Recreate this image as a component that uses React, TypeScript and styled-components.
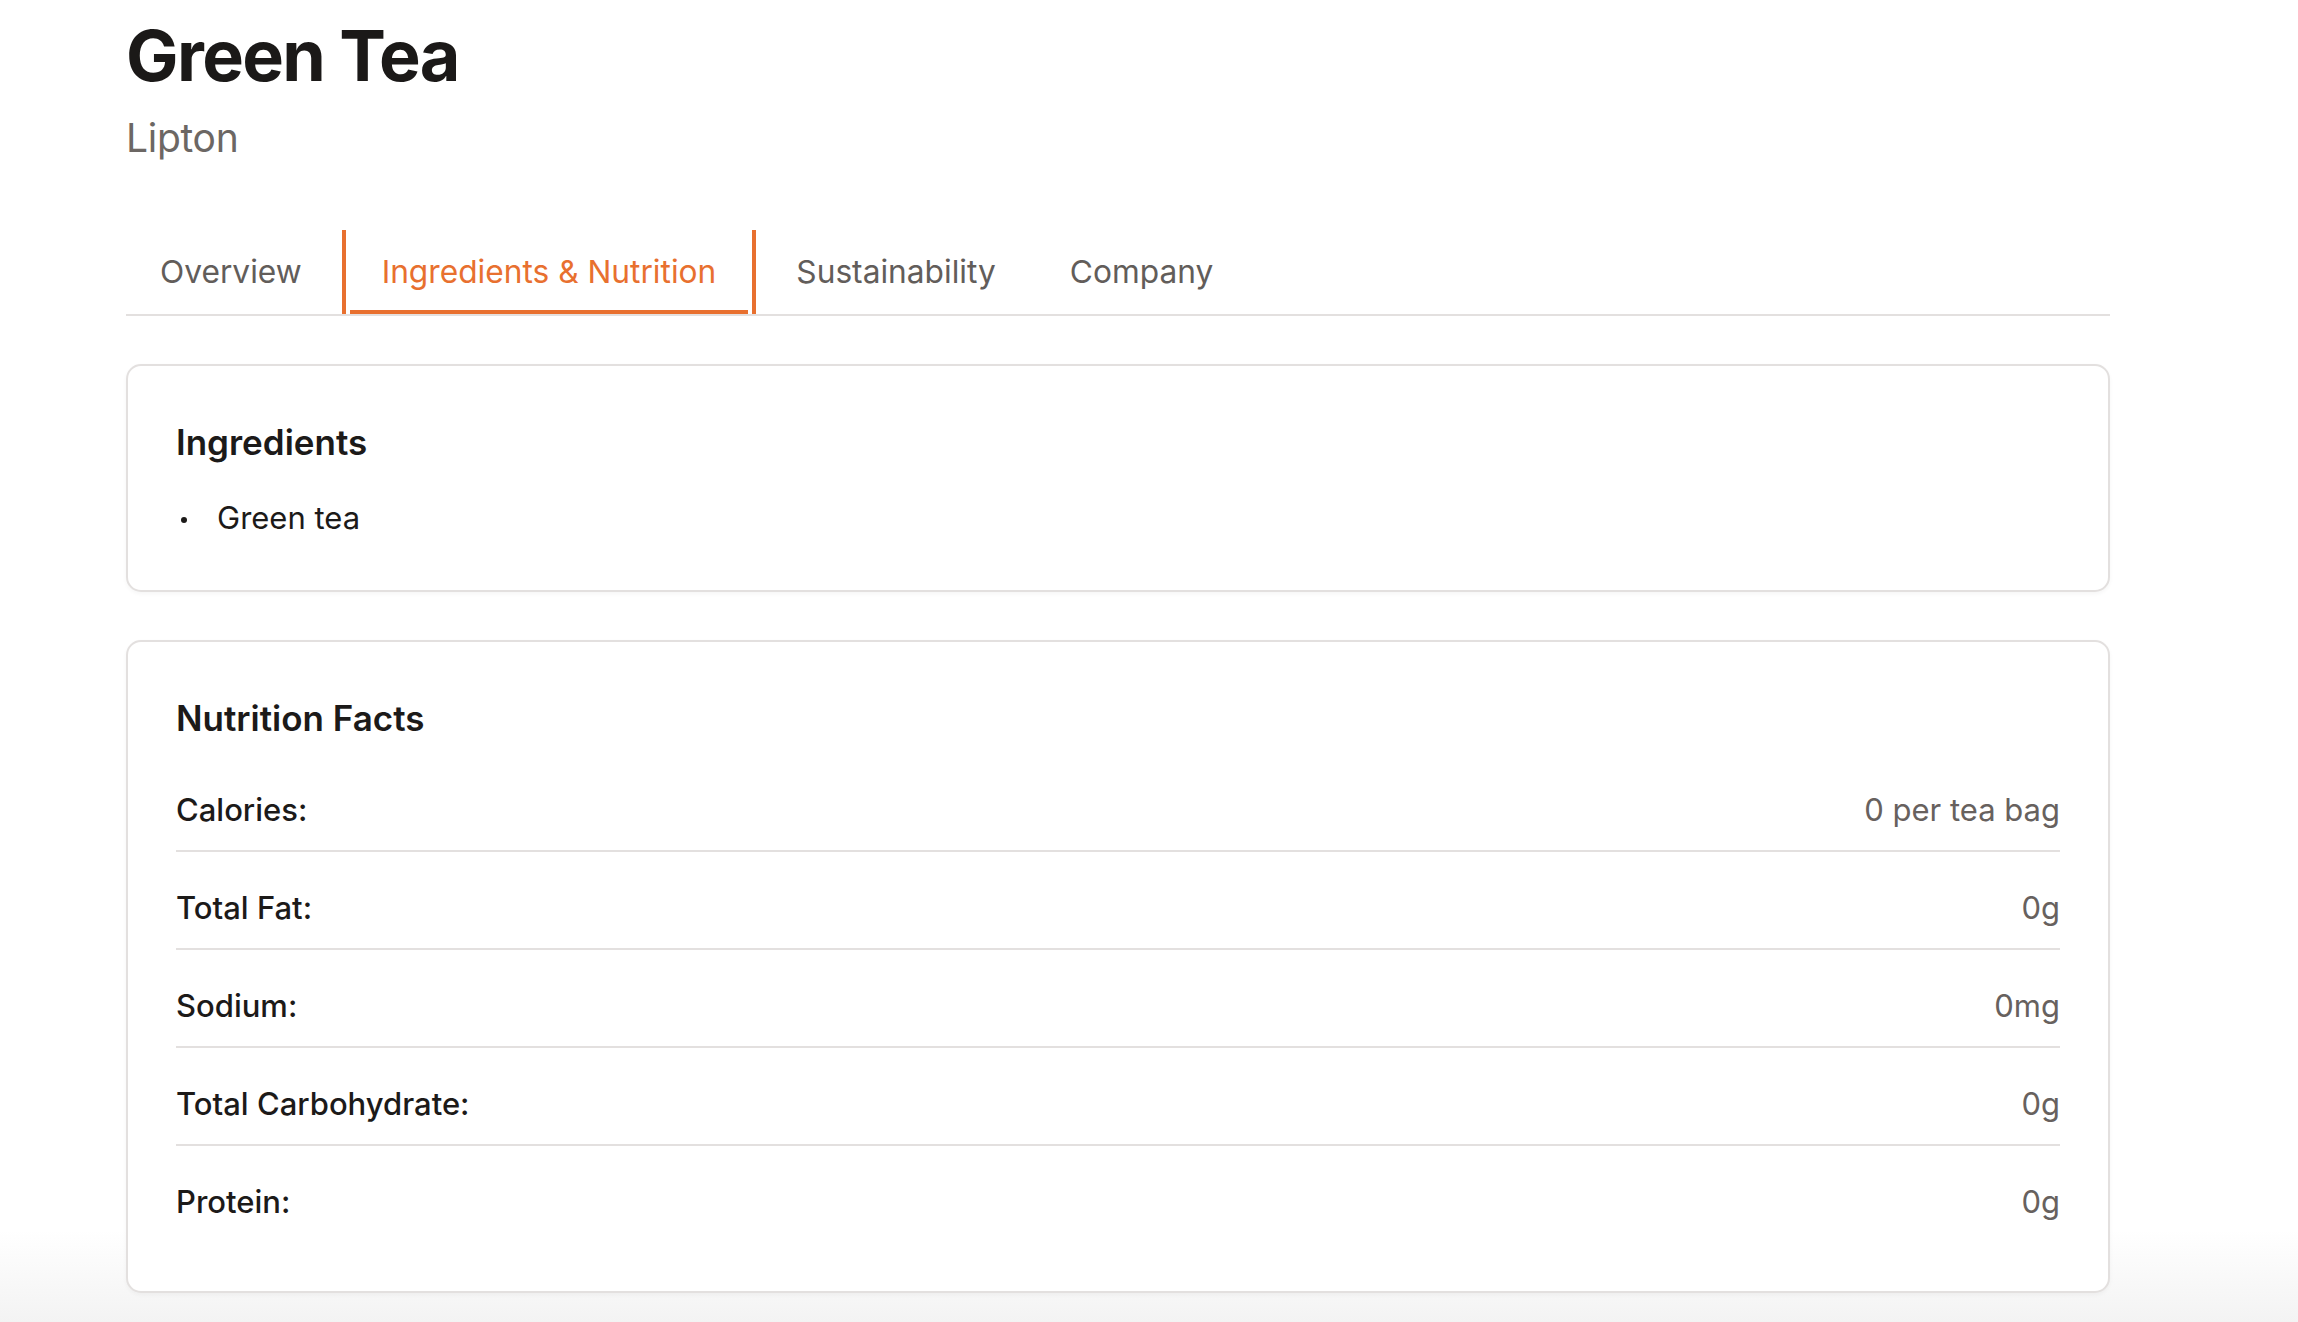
import React from 'react';
import styled, { createGlobalStyle } from 'styled-components';

const GlobalStyle = createGlobalStyle`
  html, body {
    margin: 0;
    padding: 0;
  }
  body {
    min-height: 1322px;
    font-family: Inter, "Noto Sans", sans-serif;
    color: #1c1a19;
    background: linear-gradient(to bottom, #ffffff 1230px, #f3f3f3 1322px);
    -webkit-font-smoothing: antialiased;
  }
`;

const Page = styled.main`
  width: 1984px;
  padding: 14px 0 0 126px;
`;

const Title = styled.h1`
  margin: 0;
  font-size: 70px;
  line-height: 84px;
  font-weight: 700;
  letter-spacing: -1.6px;
  color: #1b1918;
`;

const Brand = styled.div`
  margin-top: 12px;
  font-size: 39px;
  line-height: 56px;
  letter-spacing: -0.3px;
  color: #6c6764;
`;

const TabBar = styled.nav`
  display: flex;
  gap: 6px;
  margin-top: 64px;
  border-bottom: 2px solid #e3e0df;
`;

const Tab = styled.button<{ $active?: boolean }>`
  position: relative;
  margin: 0;
  padding: 18px ${({ $active }) => ($active ? 36 : 34)}px;
  background: none;
  border: none;
  border-left: ${({ $active }) => ($active ? '4px solid #e8702f' : 'none')};
  border-right: ${({ $active }) => ($active ? '4px solid #e8702f' : 'none')};
  font-family: inherit;
  font-size: 31.7px;
  line-height: 48px;
  color: ${({ $active }) => ($active ? '#e8702f' : '#625d5a')};
  cursor: pointer;

  &::after {
    content: '';
    display: ${({ $active }) => ($active ? 'block' : 'none')};
    position: absolute;
    left: 4px;
    right: 4px;
    bottom: 0;
    height: 4px;
    background: #e8702f;
  }
`;

const Card = styled.section`
  margin-top: 48px;
  padding: 48px;
  border: 2px solid #e3e0df;
  border-radius: 15px;
  background: #fff;
  box-shadow: 0 2px 4px rgba(0, 0, 0, 0.04);
`;

const CardTitle = styled.h2`
  margin: 0;
  font-size: 35px;
  line-height: 57px;
  font-weight: 600;
  color: #1c1a19;
`;

const List = styled.ul`
  margin: 23px 0 0;
  padding: 0;
  list-style: none;
`;

const ListItem = styled.li`
  display: flex;
  align-items: center;
  gap: 30px;
  font-size: 31px;
  line-height: 48px;
  color: #1c1a19;

  &::before {
    content: '';
    width: 6px;
    height: 6px;
    margin-left: 5px;
    margin-top: 4px;
    border-radius: 50%;
    background: #1c1a19;
  }
`;

const Facts = styled.div`
  margin-top: 7px;
`;

const FactRow = styled.div`
  display: flex;
  justify-content: space-between;
  padding: 32px 0 16px;
  font-size: 31px;
  line-height: 48px;
  border-bottom: 2px solid #e3e0df;

  &:last-child {
    padding-bottom: 17px;
    border-bottom: none;
  }
`;

const FactLabel = styled.span`
  font-weight: 500;
  color: #1c1a19;
`;

const FactValue = styled.span`
  color: #67615e;
`;

const tabs = ['Overview', 'Ingredients & Nutrition', 'Sustainability', 'Company'];

const facts = [
  { label: 'Calories:', value: '0 per tea bag' },
  { label: 'Total Fat:', value: '0g' },
  { label: 'Sodium:', value: '0mg' },
  { label: 'Total Carbohydrate:', value: '0g' },
  { label: 'Protein:', value: '0g' },
];

const App = () => (
  <>
    <GlobalStyle />
    <Page>
      <Title>Green Tea</Title>
      <Brand>Lipton</Brand>
      <TabBar>
        {tabs.map((tab) => (
          <Tab key={tab} $active={tab === 'Ingredients & Nutrition'}>
            {tab}
          </Tab>
        ))}
      </TabBar>
      <Card>
        <CardTitle>Ingredients</CardTitle>
        <List>
          <ListItem>Green tea</ListItem>
        </List>
      </Card>
      <Card>
        <CardTitle>Nutrition Facts</CardTitle>
        <Facts>
          {facts.map((fact) => (
            <FactRow key={fact.label}>
              <FactLabel>{fact.label}</FactLabel>
              <FactValue>{fact.value}</FactValue>
            </FactRow>
          ))}
        </Facts>
      </Card>
    </Page>
  </>
);

export default App;
